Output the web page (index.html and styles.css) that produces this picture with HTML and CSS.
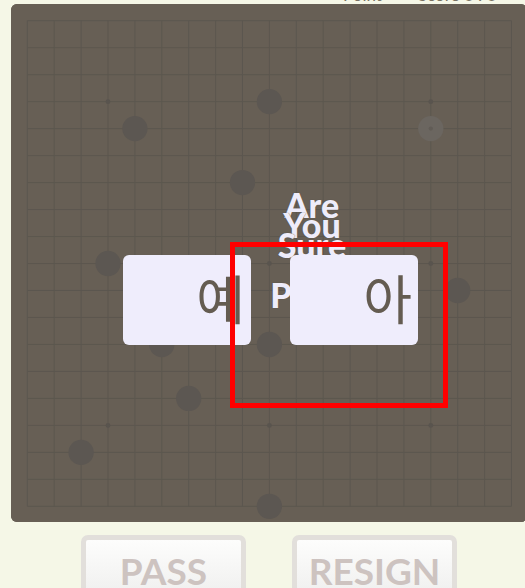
FILE: index.html
```html
<!DOCTYPE html>
<html lang="ko">
<head>
<meta charset="utf-8">
<title>Go</title>
<link rel="stylesheet" href="styles.css">
</head>
<body>
<div class="top">
  <div class="top-line"><span class="top-a">Point</span><span class="top-b">Score 0 : 0</span></div>
</div>
<div class="board">
  <svg class="grid" width="516" height="518" viewBox="0 0 516 518">
    <rect width="516" height="518" fill="#675f55"/>
    <g transform="translate(16.3 16.7) scale(26.9 26.98)">
      <path class="lines" d="M0 0H18M0 1H18M0 2H18M0 3H18M0 4H18M0 5H18M0 6H18M0 7H18M0 8H18M0 9H18M0 10H18M0 11H18M0 12H18M0 13H18M0 14H18M0 15H18M0 16H18M0 17H18M0 18H18M0 0V18M1 0V18M2 0V18M3 0V18M4 0V18M5 0V18M6 0V18M7 0V18M8 0V18M9 0V18M10 0V18M11 0V18M12 0V18M13 0V18M14 0V18M15 0V18M16 0V18M17 0V18M18 0V18"/>
      <g class="hoshi">
        <circle cx="3" cy="3" r="0.09"/><circle cx="9" cy="3" r="0.09"/><circle cx="15" cy="3" r="0.09"/>
        <circle cx="3" cy="9" r="0.09"/><circle cx="9" cy="9" r="0.09"/><circle cx="15" cy="9" r="0.09"/>
        <circle cx="3" cy="15" r="0.09"/><circle cx="9" cy="15" r="0.09"/><circle cx="15" cy="15" r="0.09"/>
      </g>
      <g class="stones">
        <circle cx="9" cy="3" r="0.47"/>
        <circle cx="4" cy="4" r="0.47"/>
        <circle cx="8" cy="6" r="0.47"/>
        <circle cx="3" cy="9" r="0.47"/>
        <circle cx="16" cy="10" r="0.47"/>
        <circle cx="5" cy="12" r="0.47"/>
        <circle cx="9" cy="12" r="0.47"/>
        <circle cx="6" cy="14" r="0.47"/>
        <circle cx="2" cy="16" r="0.47"/>
        <circle cx="9" cy="18" r="0.47"/>
      </g>
      <circle class="ghost" cx="15" cy="4" r="0.47"/>
      <circle class="ghost-dot" cx="15" cy="4" r="0.08"/>
    </g>
  </svg>
  <div class="question">
    <div class="q-main">Are You Sure</div>
    <div class="q-sub">Pass?</div>
  </div>
  <div class="modal">
    <button class="answer">예</button>
    <button class="answer">아</button>
  </div>
</div>
<div class="controls">
  <button class="ctrl">PASS</button>
  <button class="ctrl">RESIGN</button>
</div>
<div class="highlight"></div>
</body>
</html>
```

FILE: styles.css
```css
html, body {
  margin: 0;
  padding: 0;
}
body {
  background: #f5f7e7;
  width: 525px;
  height: 588px;
  overflow: hidden;
  position: relative;
  font-family: Lato, "Liberation Sans", sans-serif;
}
.top {
  height: 4px;
  overflow: hidden;
}
.top-line {
  display: flex;
  gap: 36px;
  padding-left: 343px;
  margin-top: -14px;
  font-size: 17px;
  line-height: 18px;
  color: #787263;
}
.board {
  position: relative;
  margin-left: 11px;
  width: 516px;
  height: 518px;
  border-radius: 6px;
  overflow: hidden;
  background: #675f55;
}
.grid {
  display: block;
}
.lines {
  fill: none;
  stroke: #5c574f;
  stroke-width: 1;
  vector-effect: non-scaling-stroke;
}
.hoshi circle {
  fill: #59544e;
}
.stones circle {
  fill: #5c5752;
}
.ghost {
  fill: #6b6660;
}
.ghost-dot {
  fill: #615c56;
}
.question {
  position: absolute;
  left: 241px;
  top: 191px;
  width: 120px;
  text-align: center;
  color: #eeecfa;
  font-weight: 900;
  font-size: 34px;
  line-height: 20px;
  text-shadow: 0 0 1px #4d4740;
}
.q-main {
  width: 80px;
  margin: 0 auto;
}
.q-sub {
  margin-top: 30px;
}
.modal {
  position: absolute;
  left: 112px;
  top: 251px;
  display: flex;
  gap: 39px;
}
.answer {
  width: 128px;
  height: 90px;
  border: none;
  border-radius: 6px;
  background: #efedfc;
  color: #645c51;
  font-family: "Noto Sans CJK KR", sans-serif;
  font-size: 53px;
  display: flex;
  align-items: center;
  justify-content: flex-end;
  padding: 0 6px 6px 0;
}
.controls {
  width: 516px;
  margin-left: 11px;
  margin-top: 13px;
  display: flex;
  justify-content: center;
  gap: 46px;
}
.ctrl {
  width: 165px;
  height: 64px;
  border: 5px solid #e2dfdb;
  border-radius: 7px;
  background: linear-gradient(#fdfdfc, #f0f0ef);
  color: #cdc3c0;
  font-family: Lato, "Liberation Sans", sans-serif;
  font-weight: 700;
  font-size: 37px;
  padding: 8px 0 0 0;
  display: flex;
  justify-content: center;
  align-items: flex-start;
}
.highlight {
  position: absolute;
  left: 230px;
  top: 242px;
  width: 218px;
  height: 166px;
  box-sizing: border-box;
  border: 5px solid #ff0000;
  pointer-events: none;
}
```
